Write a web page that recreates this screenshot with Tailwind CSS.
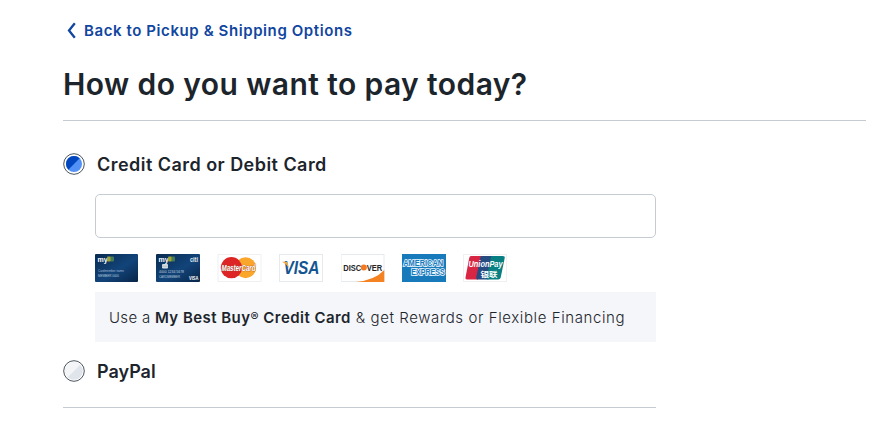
<!DOCTYPE html>
<html lang="en">
<head>
<meta charset="utf-8">
<title>Payment</title>
<script src="https://cdn.jsdelivr.net/npm/@tailwindcss/browser@4"></script>
</head>
<body class="bg-white overflow-hidden font-['Inter','Liberation_Sans',sans-serif] text-[#1d252c]">
<main class="ml-[63px] w-[803px] pt-[20px]">
  <a href="#" class="flex h-[21px] w-max items-center text-[#1046a0]">
    <svg class="mr-[7px] ml-[3px] -mt-px" width="11" height="17" viewBox="0 0 11 17" fill="none" stroke="#1046a0" stroke-width="2.3"><path d="M8.8 1.2L3 8.5L8.8 15.8"/></svg>
    <span class="whitespace-nowrap text-[15px] leading-[21px] font-semibold tracking-[0.59px]">Back to Pickup &amp; Shipping Options</span>
  </a>
  <h1 class="mt-[23px] h-[57px] border-b border-[#c5cbd0] text-[30px] leading-[40px] font-semibold tracking-[0.41px] whitespace-nowrap">How do you want to pay today?</h1>

  <form class="w-[593px] border-b border-[#c5cbd0] pt-[32px] pb-[24px]">
    <div class="flex h-[23px] items-center">
      <svg class="-mt-px" width="22" height="22" viewBox="0 0 22 22"><circle cx="11" cy="11" r="10.3" fill="#fff" stroke="#4d565e"/><circle cx="11" cy="11" r="8" fill="#5291f5"/><path d="M5.34 16.66A8 8 0 0 1 16.66 5.34Z" fill="#0046be"/></svg>
      <span class="ml-[12px] text-[18px] leading-[23px] font-semibold tracking-[0.46px] whitespace-nowrap">Credit Card or Debit Card</span>
    </div>
    <div class="ml-[32px]">
      <input aria-label="Card number" class="mt-[18px] block h-[44px] w-[561px] rounded-[5px] border border-[#c5cbd0] bg-white px-3">
      <div class="mt-[16px] flex h-[28px] gap-[17.4px]">
        <svg width="44" height="28" viewBox="0 0 44 28" font-family="Liberation Sans, sans-serif">
          <defs><linearGradient id="navy" x1="0" y1="0" x2="1" y2="1"><stop offset="0" stop-color="#092b50"/><stop offset=".55" stop-color="#12447a"/><stop offset="1" stop-color="#082548"/></linearGradient></defs>
          <rect width="43" height="28" rx="1" fill="url(#navy)"/>
          <text x="2.5" y="7.5" font-size="7" font-weight="bold" fill="#fff">my</text><rect x="12" y="2.5" width="4" height="5" rx="1" fill="#a3a537"/><rect x="15.5" y="2.5" width="3.5" height="5" rx="1" fill="#477b58"/>
          <text x="3" y="18" font-size="4" fill="#a5bdd7" textLength="26" lengthAdjust="spacingAndGlyphs">Cardmember name</text>
          <text x="3" y="23" font-size="3.5" fill="#b4c8dc" textLength="21" lengthAdjust="spacingAndGlyphs">MEMBER 0000</text>
        </svg>
        <svg width="44" height="28" viewBox="0 0 44 28" font-family="Liberation Sans, sans-serif">
          <rect width="44" height="28" rx="1" fill="url(#navy)"/>
          <text x="2.5" y="7.5" font-size="7" font-weight="bold" fill="#fff">my</text><rect x="12" y="2.5" width="4" height="5" rx="1" fill="#a3a537"/><rect x="15.5" y="2.5" width="3.5" height="5" rx="1" fill="#477b58"/>
          <text x="34" y="7.5" font-size="7" font-weight="bold" fill="#e1eaf2" textLength="8" lengthAdjust="spacingAndGlyphs">citi</text>
          <rect x="6" y="10" width="6" height="4.5" rx="1" fill="#d5dce0"/><path d="M6 12.2h6" stroke="#8ca0b0" stroke-width=".5"/>
          <text x="3" y="19.3" font-size="4" fill="#c1d1df" textLength="25" lengthAdjust="spacingAndGlyphs">4000 1234 5678</text>
          <text x="3" y="24" font-size="3.5" fill="#b4c8dc" textLength="21" lengthAdjust="spacingAndGlyphs">CARDMEMBER</text>
          <text x="33" y="26.3" font-size="4.7" font-weight="bold" fill="#fff" textLength="9.5" lengthAdjust="spacingAndGlyphs">VISA</text>
        </svg>
        <svg class="overflow-visible" width="44" height="28" viewBox="0 0 44 28" font-family="Liberation Sans, sans-serif">
          <rect x="0" y=".5" width="43" height="27" fill="#fff" stroke="#eef0f2"/>
          <circle cx="27.6" cy="13.7" r="10.5" fill="#f9a62b"/><circle cx="13.4" cy="13.7" r="10.6" fill="#dc2524"/>
          <text x="3.5" y="16.7" font-size="8.5" font-weight="bold" font-style="italic" fill="#fff" stroke="#a34a2b" stroke-width=".7" paint-order="stroke" textLength="34" lengthAdjust="spacingAndGlyphs">MasterCard</text>
        </svg>
        <svg class="overflow-visible" width="44" height="28" viewBox="0 0 44 28" font-family="Liberation Sans, sans-serif">
          <rect x=".5" y=".5" width="43" height="27" fill="#fff" stroke="#e7eaed"/>
          <text x="4.5" y="20.3" font-size="17.5" font-weight="bold" font-style="italic" fill="#145591" textLength="36" lengthAdjust="spacingAndGlyphs">VISA</text><path d="M3 7.8H8L10.2 14Q7.5 9.8 3 7.8Z" fill="#f2a93b"/>
        </svg>
        <svg width="44" height="28" viewBox="0 0 44 28" font-family="Liberation Sans, sans-serif">
          <rect x="0" y=".5" width="43" height="27" fill="#fff" stroke="#e7eaed"/>
          <path d="M15 28Q34 26 43.3 16V28Z" fill="#f58220"/>
          <text x="2.2" y="16.6" font-size="9" font-weight="bold" fill="#252525" textLength="18" lengthAdjust="spacingAndGlyphs">DISC</text><circle cx="22.8" cy="13.5" r="3" fill="#f47920"/>
          <text x="25.7" y="16.6" font-size="9" font-weight="bold" fill="#252525" textLength="15.5" lengthAdjust="spacingAndGlyphs">VER</text>
        </svg>
        <svg class="overflow-visible" width="44" height="28" viewBox="0 0 44 28" font-family="Liberation Sans, sans-serif" font-weight="bold">
          <rect width="44" height="28" fill="#167abb"/>
          <g fill="#167abb" stroke="#eef8ff" stroke-width="1.7" paint-order="stroke" font-size="8.6"><text x="1.2" y="12.3" textLength="40" lengthAdjust="spacingAndGlyphs">AMERICAN</text><text x="9.2" y="21.3" textLength="33.5" lengthAdjust="spacingAndGlyphs">EXPRESS</text></g>
        </svg>
        <svg width="44" height="28" viewBox="0 0 44 28" font-family="Liberation Sans, sans-serif" font-weight="bold" fill="#fff">
          <rect x=".5" y=".5" width="43" height="27" fill="#fff" stroke="#eef0f2"/>
          <path d="M8 2H20L15 25.5H4Q2 25.5 2.5 23.5L6.2 4Q6.7 2 8 2Z" fill="#d82543"/><path d="M18.5 2H30.5L25.5 25.5H14.5Q12.7 25.5 13.2 23.5L17.2 4Q17.5 2 18.5 2Z" fill="#254b81"/><path d="M29.2 2H39.7Q42.2 2 41.7 4L37.7 23.5Q37.2 25.5 35.2 25.5H24.7Q23.2 25.5 23.7 23.5L27.7 4Q28.2 2 29.2 2Z" fill="#087f83"/>
          <text x="5.5" y="12.9" font-size="8.3" font-style="italic" textLength="34" lengthAdjust="spacingAndGlyphs">UnionPay</text>
          <text x="17.5" y="22.6" font-size="7" font-family="Noto Sans CJK SC, sans-serif" textLength="17" lengthAdjust="spacingAndGlyphs">银联</text>
        </svg>
      </div>
      <p class="mt-[10px] flex h-[50px] w-[561px] items-center bg-[#f4f6f9] pt-[2px] pl-[14px] text-[15px] whitespace-nowrap"><span class="font-light tracking-[0.6px]"><span class="tracking-[0.3px]">Use a </span><b class="font-semibold tracking-[0.46px]">My Best Buy<span class="relative -top-[2px] text-[12px] font-medium">®</span> Credit Card</b> &amp; get Rewards or Flexible Financing</span></p>
    </div>
    <div class="mt-[18px] flex h-[23px] items-center">
      <svg class="-mt-px" width="22" height="22" viewBox="0 0 22 22"><circle cx="11" cy="11" r="10.3" fill="#fff" stroke="#4d565e"/><circle cx="11" cy="11" r="8.8" fill="#e0e5ec"/><path d="M4.7 17.3A8.9 8.9 0 0 1 17.3 4.7Z" fill="#f4f5f7"/></svg>
      <span class="ml-[12px] text-[18px] leading-[23px] font-semibold whitespace-nowrap">PayPal</span>
    </div>
  </form>
</main>
</body>
</html>
